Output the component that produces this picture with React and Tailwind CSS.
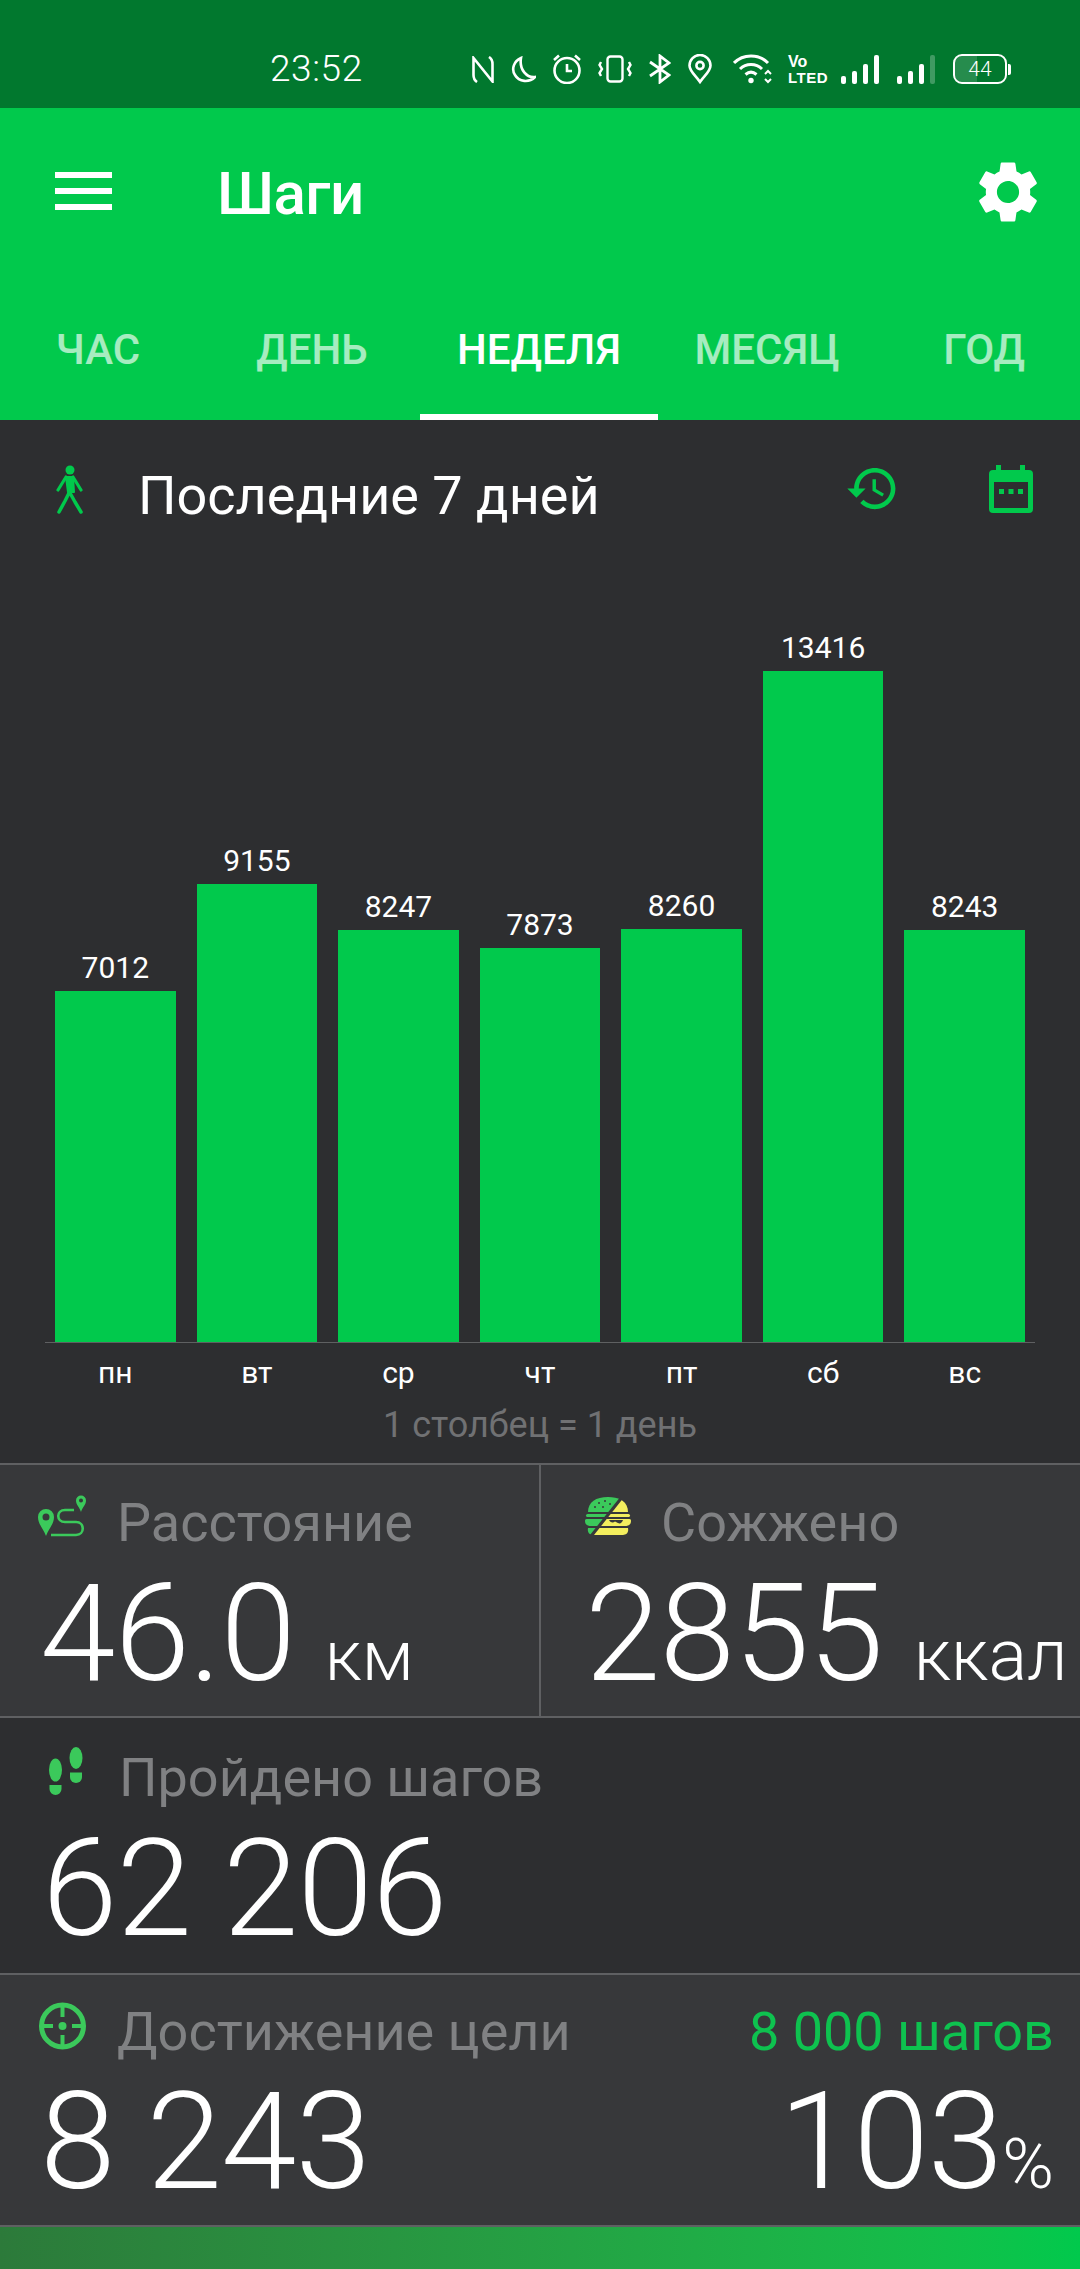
const days = [
  { day: 'пн', steps: 7012 },
  { day: 'вт', steps: 9155 },
  { day: 'ср', steps: 8247 },
  { day: 'чт', steps: 7873 },
  { day: 'пт', steps: 8260 },
  { day: 'сб', steps: 13416 },
  { day: 'вс', steps: 8243 },
]

const tabs = [
  { name: 'ЧАС', width: 'w-[212px]' },
  { name: 'ДЕНЬ', width: 'w-[216px]' },
  { name: 'НЕДЕЛЯ', width: 'w-[238px]', active: true },
  { name: 'МЕСЯЦ', width: 'w-[218px]' },
  { name: 'ГОД', width: 'w-[216px]' },
]

function StatusBar() {
  return (
    <div className="h-[108px] shrink-0 bg-[#01782e] text-white flex items-start pt-[54px] pl-[270px]">
      <span className="text-[37px] leading-[30px] w-[93px] font-light tracking-[0.6px] whitespace-nowrap">23:52</span>
      {/* nfc */}
      <svg className="ml-[109px] mt-[2px] w-[22px] h-[27px]" viewBox="0 0 22 27" fill="none" stroke="white" strokeWidth="2.6">
        <path d="M5 26 C2 24 1.500 22 1.500 19 V2 L20.500 25.500 V8 C20.500 5 20 3 17 1" />
      </svg>
      {/* do not disturb */}
      <svg className="ml-[17px] mt-[2px] w-[25px] h-[27px]" viewBox="0 0 25 27" fill="none" stroke="white" strokeWidth="2.6">
        <path d="M10 2 C3 5 0 13 4 19 C8 26 18 27 24 21 C16 22 8 14 10 2 Z" />
      </svg>
      {/* alarm */}
      <svg className="ml-[16px] w-[30px] h-[30px]" viewBox="0 0 30 30" fill="none" stroke="white" strokeWidth="2.6">
        <circle cx="15" cy="16.500" r="12.500" />
        <path d="M15 10 V17 H20" />
        <path d="M2 6 L7 1.500 M28 6 L23 1.500" />
      </svg>
      {/* vibrate */}
      <svg className="ml-[16px] mt-[1px] w-[34px] h-[28px]" viewBox="0 0 34 28" fill="none" stroke="white" strokeWidth="2.4">
        <rect x="9.500" y="1.500" width="15" height="25" rx="3" />
        <path d="M3 7 L1.500 10 L4 14 L1.500 18 L3 21 M31 7 L32.500 10 L30 14 L32.500 18 L31 21" />
      </svg>
      {/* bluetooth */}
      <svg className="ml-[17px] w-[22px] h-[30px]" viewBox="0 0 22 30" fill="none" stroke="white" strokeWidth="2.8">
        <path d="M1 8 L20 21 L11 28 V2 L20 9 L1 22" />
      </svg>
      {/* location */}
      <svg className="ml-[17px] w-[24px] h-[30px]" viewBox="0 0 24 30" fill="none" stroke="white" strokeWidth="2.6">
        <path d="M12 28 C7 21 1.500 17 1.500 11.500 A10.500 10.500 0 0 1 22.500 11.500 C22.500 17 17 21 12 28 Z" />
        <circle cx="12" cy="11.500" r="3.600" />
      </svg>
      {/* wifi */}
      <svg className="ml-[21px] w-[40px] h-[30px]" viewBox="0 0 40 30" fill="none" stroke="white" strokeWidth="3">
        <path d="M1 9 C10 -0.500 26 -0.500 35 9" />
        <path d="M7 15 C13 9 23 9 29 15" />
        <path d="M12.500 20.500 C16 17.500 20 17.500 23.500 20.500" />
        <circle cx="18" cy="26.500" r="2.700" fill="white" stroke="none" />
        <path d="M32 20 L35 17 L38 20 M32 25 L35 28 L38 25" strokeWidth="2" />
      </svg>
      {/* volte */}
      <div className="ml-[15px] w-[35px] h-[31px] font-bold [font-family:'Liberation_Sans',sans-serif] flex flex-col">
        <span className="text-[16px] leading-[16px]">Vo</span>
        <span className="text-[15px] leading-[15px] tracking-[0.5px]">LTED</span>
      </div>
      {/* signal */}
      <div className="ml-[18px] w-[38px] h-[30px] flex items-end gap-[6px]">
        <span className="w-[5px] h-[8px] rounded-[2px] bg-white" />
        <span className="w-[5px] h-[13px] rounded-[2px] bg-white" />
        <span className="w-[5px] h-[20px] rounded-[2px] bg-white" />
        <span className="w-[5px] h-[29px] rounded-[2px] bg-white" />
      </div>
      <div className="ml-[18px] w-[38px] h-[30px] flex items-end gap-[6px]">
        <span className="w-[5px] h-[8px] rounded-[2px] bg-white" />
        <span className="w-[5px] h-[13px] rounded-[2px] bg-white" />
        <span className="w-[5px] h-[20px] rounded-[2px] bg-white" />
        <span className="w-[5px] h-[29px] rounded-[2px] bg-white/25" />
      </div>
      {/* battery */}
      <div className="ml-[18px] flex items-center">
        <div className="relative w-[54px] h-[30px] rounded-[9px] border-[2.5px] border-white overflow-hidden flex items-center justify-center">
          <div className="absolute left-0 top-0 bottom-0 w-[44%] bg-white/15" />
          <span className="relative text-[21px] leading-none font-light">44</span>
        </div>
        <span className="ml-[1px] w-[3px] h-[11px] rounded-r-[2px] bg-white" />
      </div>
    </div>
  )
}

function Header() {
  return (
    <div className="h-[312px] shrink-0 bg-[#01c94c] text-white flex flex-col overflow-hidden">
      <div className="flex items-start pt-[48px] h-[199px]">
        <div className="ml-[55px] mt-[16px] w-[57px] flex flex-col gap-[10px]">
          <span className="h-[6px] bg-white" />
          <span className="h-[6px] bg-white" />
          <span className="h-[6px] bg-white" />
        </div>
        <h1 className="ml-[105px] text-[60px] leading-[76px] font-medium tracking-[-0.5px]">Шаги</h1>
        <svg className="ml-auto mr-[35px] w-[74px] h-[74px] -mt-[1px]" viewBox="0 0 24 24" fill="white">
          <path d="M19.140 12.940c.040-.300.060-.610.060-.940 0-.320-.020-.640-.070-.940l2.030-1.580a.490.490 0 0 0 .120-.610l-1.920-3.320a.488.488 0 0 0-.590-.220l-2.390.960c-.500-.380-1.030-.700-1.620-.940l-.360-2.540a.484.484 0 0 0-.480-.410h-3.840c-.240 0-.430.170-.470.410l-.360 2.540c-.590.240-1.130.570-1.620.940l-2.390-.960c-.220-.080-.470 0-.590.220L2.740 8.870c-.120.210-.080.470.120.610l2.030 1.580c-.050.300-.090.630-.090.940s.020.640.070.940l-2.030 1.580a.490.490 0 0 0-.120.610l1.920 3.320c.120.220.370.290.590.220l2.390-.960c.500.380 1.030.700 1.620.940l.360 2.540c.050.240.240.410.480.410h3.840c.240 0 .440-.170.470-.410l.360-2.540c.590-.240 1.130-.560 1.620-.940l2.390.960c.220.080.470 0 .590-.220l1.920-3.320c.120-.220.070-.470-.120-.610l-2.010-1.580zM12 15.600c-1.980 0-3.600-1.620-3.600-3.600s1.620-3.600 3.600-3.600 3.600 1.620 3.600 3.600-1.620 3.600-3.600 3.600z" />
        </svg>
      </div>
      <div className="flex ml-[-8px] w-[1100px] h-[113px]">
        {tabs.map((tab) => (
          <div
            key={tab.name}
            className={`${tab.width} shrink-0 h-full flex justify-center pt-[18px] text-[42px] leading-[50px] font-medium ${
              tab.active ? 'text-white border-b-[6px] border-white' : 'text-white/65'
            }`}
          >
            {tab.name}
          </div>
        ))}
      </div>
    </div>
  )
}

function WalkIcon() {
  return (
    <svg className="ml-[55px] w-[28px] h-[50px]" viewBox="0 0 28 50" fill="#01c94c" stroke="#01c94c" strokeLinecap="round" strokeLinejoin="round">
      <circle cx="15" cy="5" r="4.500" stroke="none" />
      <path d="M11 12 H18 L19 27 H13 Z" strokeWidth="2" />
      <path d="M11 12 L3 25 M18 12 L26 25" strokeWidth="3.200" fill="none" />
      <path d="M14 28 L10 36 L4 47 M15 28 L20 37 L26 47" strokeWidth="3.500" fill="none" />
    </svg>
  )
}

function Chart() {
  return (
    <div className="flex flex-col">
      <div className="h-[774px] grid grid-cols-7 gap-[21px] px-[55px] items-end">
        {days.map((d) => (
          <div key={d.day} className="flex flex-col items-center">
            <span className="text-[30px] leading-[36px] text-white mb-[5px]">{d.steps}</span>
            <div className="w-full bg-[#01c94c]" style={{ height: d.steps * 0.05 }} />
          </div>
        ))}
      </div>
      <div className="mx-[45px] h-[1px] bg-[#5f6062]" />
      <div className="grid grid-cols-7 gap-[21px] px-[55px] mt-[12px]">
        {days.map((d) => (
          <span key={d.day} className="text-center text-[30px] leading-[36px] text-white">{d.day}</span>
        ))}
      </div>
      <div className="mt-[14px] text-center text-[36px] leading-[40px] text-[#707173]">1 столбец = 1 день</div>
    </div>
  )
}

function RouteIcon() {
  return (
    <svg className="w-[49px] h-[42px]" viewBox="0 0 49 42">
      <path fillRule="evenodd" fill="#3bc95b" d="M8 41 C5 33 0 29 0 22 A8 8 0 0 1 16 22 C16 29 11 33 8 41 Z M8 18.500 A3.500 3.500 0 1 0 8 25.500 A3.500 3.500 0 1 0 8 18.500 Z" />
      <path fillRule="evenodd" fill="#3bc95b" d="M43 17 C41.500 12 38 10 38 5.500 A5 5 0 0 1 48 5.500 C48 10 44.500 12 43 17 Z M43 3.500 A2 2 0 1 0 43 7.500 A2 2 0 1 0 43 3.500 Z" />
      <path fill="none" stroke="#3bc95b" strokeWidth="2.600" d="M36 15 H27 C18 15 18 27 27 27 H38 C47 27 47 40 38 40 H13" />
    </svg>
  )
}

function BurgerIcon() {
  const shape = (
    <>
      <path d="M3 16 C3 6 11 1 23 1 C35 1 43 6 43 16 Z" />
      <rect x="1" y="18" width="44" height="3" rx="1.500" />
      <path d="M0 25 C0 23 1 23 3 23 H43 C45 23 46 23 46 25 C46 29 43 30 40 30 H6 C3 30 0 29 0 25 Z" />
      <path d="M3 32 H43 C44 37 41 39 38 39 H8 C5 39 2 37 3 32 Z" />
    </>
  )
  return (
    <svg className="w-[46px] h-[39px]" viewBox="0 0 46 39">
      <defs>
        <clipPath id="burger-top"><polygon points="0,0 36,0 5,39 0,39" /></clipPath>
        <clipPath id="burger-bottom"><polygon points="40,0 46,0 46,39 9,39" /></clipPath>
      </defs>
      <g fill="#3bc95b" clipPath="url(#burger-top)">{shape}</g>
      <g fill="#f3ee5e" clipPath="url(#burger-bottom)">{shape}</g>
      <path fill="#37383a" d="M24 24 H38 C37 27 35 28 33 27 L30 25.500 C28 27 26 27 24 24 Z" />
      <g fill="#37383a">
        <circle cx="14" cy="7" r="1" /><circle cx="20" cy="5" r="1" /><circle cx="25" cy="8" r="1" />
        <circle cx="10" cy="11" r="1" /><circle cx="18" cy="11" r="1" />
      </g>
    </svg>
  )
}

function FeetIcon() {
  return (
    <svg className="w-[34px] h-[48px]" viewBox="0 0 34 48" fill="#3bc95b">
      <ellipse cx="6.500" cy="23" rx="6.500" ry="11.500" />
      <path d="M0.500 38 H12.500 V42 A6 6 0 0 1 0.500 42 Z" />
      <ellipse cx="27" cy="11" rx="6.500" ry="11" />
      <path d="M21 25.500 H33 V30 A6 6 0 0 1 21 30 Z" />
    </svg>
  )
}

function TargetIcon() {
  return (
    <svg className="w-[49px] h-[48px]" viewBox="0 0 49 48" fill="none" stroke="#3bc95b" strokeWidth="5">
      <circle cx="24.500" cy="24" r="21" />
      <path d="M24.500 3 V15 M24.500 33 V45 M3 24 H15 M34 24 H46" strokeWidth="4" />
      <circle cx="24.500" cy="24" r="4" fill="#3bc95b" stroke="none" />
    </svg>
  )
}

function Label({ children, className = '' }) {
  return <span className={`text-[54px] leading-[60px] text-[#808183] ${className}`}>{children}</span>
}

function BigNumber({ children, className = '' }) {
  return <span className={`text-[136px] leading-[136px] font-light tracking-[-1px] text-white ${className}`}>{children}</span>
}

function Stats() {
  return (
    <div className="flex flex-col">
      <div className="h-[2px] bg-[#5f6062]" />
      <div className="h-[251px] bg-[#37383a] flex">
        <div className="w-[541px] shrink-0 border-r-[2px] border-[#5f6062] pt-[28px] pl-[38px]">
          <div className="flex items-start">
            <div className="mt-[2px]"><RouteIcon /></div>
            <Label className="ml-[30px]">Расстояние</Label>
          </div>
          <div className="mt-[13px] flex items-baseline ml-[2px]">
            <BigNumber>46.0</BigNumber>
            <span className="ml-[30px] text-[71px] leading-[64px] font-light text-white">км</span>
          </div>
        </div>
        <div className="flex-1 pt-[28px] pl-[44px] overflow-hidden">
          <div className="flex items-start">
            <div className="mt-[3px]"><BurgerIcon /></div>
            <Label className="ml-[30px]">Сожжено</Label>
          </div>
          <div className="mt-[13px] flex items-baseline">
            <BigNumber>2855</BigNumber>
            <span className="ml-[31px] text-[72px] leading-[64px] font-light text-white whitespace-nowrap">ккал</span>
          </div>
        </div>
      </div>
      <div className="h-[2px] bg-[#5f6062]" />
      <div className="h-[255px] bg-[#2d2e30] pt-[30px] pl-[49px]">
        <div className="flex items-start">
          <div className="-mt-[1px]"><FeetIcon /></div>
          <Label className="ml-[36px]">Пройдено шагов</Label>
        </div>
        <div className="mt-[13px] -ml-[7px]"><BigNumber>62 206</BigNumber></div>
      </div>
      <div className="h-[2px] bg-[#5f6062]" />
      <div className="h-[250px] bg-[#37383a] pt-[27px] pl-[38px] pr-[26px]">
        <div className="flex items-start">
          <TargetIcon />
          <Label className="ml-[30px]">Достижение цели</Label>
          <span className="ml-auto text-[54px] leading-[60px] text-[#0ec24f]">8 000 шагов</span>
        </div>
        <div className="mt-[12px] flex items-baseline justify-between">
          <BigNumber className="ml-[2px]">8 243</BigNumber>
          <div className="flex items-baseline">
            <BigNumber>103</BigNumber>
            <span className="text-[70px] leading-[64px] font-light text-white">%</span>
          </div>
        </div>
      </div>
      <div className="h-[2px] bg-[#5f6062]" />
    </div>
  )
}

export default function App() {
  return (
    <div className="w-[1080px] h-[2269px] overflow-hidden flex flex-col bg-[#2d2e30] [font-family:Roboto,sans-serif]">
      <StatusBar />
      <Header />
      <div className="h-[1043px] shrink-0 flex flex-col">
        <div className="flex items-start pt-[45px] h-[148px] shrink-0">
          <WalkIcon />
          <span className="ml-[55px] text-[54px] leading-[58px] text-white mt-[2px]">Последние 7 дней</span>
          <svg className="ml-auto mt-[-4px] w-[55px] h-[55px]" viewBox="0 0 24 24" fill="#01c94c">
            <path d="M13 3c-4.970 0-9 4.030-9 9H1l3.890 3.890.070.140L9 12H6c0-3.870 3.130-7 7-7s7 3.130 7 7-3.130 7-7 7c-1.930 0-3.680-.790-4.940-2.060l-1.420 1.420C8.270 19.990 10.510 21 13 21c4.970 0 9-4.030 9-9s-4.030-9-9-9zm-1 5v5l4.280 2.540.720-1.210-3.500-2.080V8H12z" />
          </svg>
          <svg className="ml-[89px] mr-[47px] w-[44px] h-[48px]" viewBox="0 0 44 48" fill="#01c94c">
            <rect x="7" y="0" width="5" height="8" />
            <rect x="31" y="0" width="5" height="8" />
            <path fillRule="evenodd" d="M4 5 H40 A4 4 0 0 1 44 9 V44 A4 4 0 0 1 40 48 H4 A4 4 0 0 1 0 44 V9 A4 4 0 0 1 4 5 Z M5 17 V43 H39 V17 Z" />
            <rect x="10" y="24" width="5" height="5" />
            <rect x="19.500" y="24" width="5" height="5" />
            <rect x="29" y="24" width="5" height="5" />
          </svg>
        </div>
        <Chart />
      </div>
      <Stats />
      <div className="flex-1 bg-gradient-to-r from-[#2c7a3a] to-[#01c94c]" />
    </div>
  )
}
